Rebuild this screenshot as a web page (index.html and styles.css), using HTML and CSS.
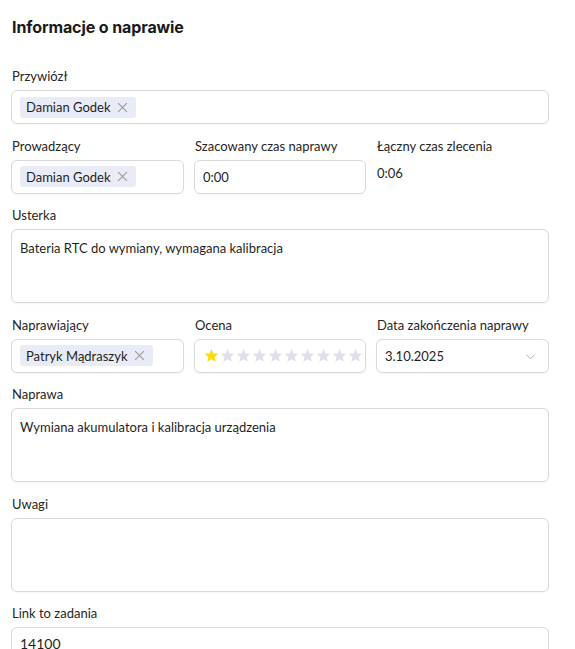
FILE: index.html
```html
<!DOCTYPE html>
<html lang="pl">
<head>
<meta charset="utf-8">
<link rel="stylesheet" href="styles.css">
</head>
<body>
<div class="page">
  <h2 class="title">Informacje o naprawie</h2>

  <div class="field">
    <div class="label">Przywiózł</div>
    <div class="box select">
      <span class="tag">Damian Godek <svg class="x" viewBox="0 0 10 10"><path d="M1 1L9 9M9 1L1 9"/></svg></span>
    </div>
  </div>

  <div class="row">
    <div class="field">
      <div class="label">Prowadzący</div>
      <div class="box select">
        <span class="tag">Damian Godek <svg class="x" viewBox="0 0 10 10"><path d="M1 1L9 9M9 1L1 9"/></svg></span>
      </div>
    </div>
    <div class="field">
      <div class="label">Szacowany czas naprawy</div>
      <div class="box input">0:00</div>
    </div>
    <div class="field">
      <div class="label">Łączny czas zlecenia</div>
      <div class="value">0:06</div>
    </div>
  </div>

  <div class="field">
    <div class="label">Usterka</div>
    <div class="box area">Bateria RTC do wymiany, wymagana kalibracja</div>
  </div>

  <div class="row">
    <div class="field">
      <div class="label">Naprawiający</div>
      <div class="box select">
        <span class="tag">Patryk Mądraszyk <svg class="x" viewBox="0 0 10 10"><path d="M1 1L9 9M9 1L1 9"/></svg></span>
      </div>
    </div>
    <div class="field">
      <div class="label">Ocena</div>
      <div class="box rate">
        <svg class="star on" viewBox="0 0 24 24"><path d="M12 1.5l3.1 7.1 7.7.7-5.8 5.1 1.7 7.6L12 18l-6.7 4 1.7-7.6L1.2 9.3l7.7-.7z"/></svg>
        <svg class="star" viewBox="0 0 24 24"><path d="M12 1.5l3.1 7.1 7.7.7-5.8 5.1 1.7 7.6L12 18l-6.7 4 1.7-7.6L1.2 9.3l7.7-.7z"/></svg>
        <svg class="star" viewBox="0 0 24 24"><path d="M12 1.5l3.1 7.1 7.7.7-5.8 5.1 1.7 7.6L12 18l-6.7 4 1.7-7.6L1.2 9.3l7.7-.7z"/></svg>
        <svg class="star" viewBox="0 0 24 24"><path d="M12 1.5l3.1 7.1 7.7.7-5.8 5.1 1.7 7.6L12 18l-6.7 4 1.7-7.6L1.2 9.3l7.7-.7z"/></svg>
        <svg class="star" viewBox="0 0 24 24"><path d="M12 1.5l3.1 7.1 7.7.7-5.8 5.1 1.7 7.6L12 18l-6.7 4 1.7-7.6L1.2 9.3l7.7-.7z"/></svg>
        <svg class="star" viewBox="0 0 24 24"><path d="M12 1.5l3.1 7.1 7.7.7-5.8 5.1 1.7 7.6L12 18l-6.7 4 1.7-7.6L1.2 9.3l7.7-.7z"/></svg>
        <svg class="star" viewBox="0 0 24 24"><path d="M12 1.5l3.1 7.1 7.7.7-5.8 5.1 1.7 7.6L12 18l-6.7 4 1.7-7.6L1.2 9.3l7.7-.7z"/></svg>
        <svg class="star" viewBox="0 0 24 24"><path d="M12 1.5l3.1 7.1 7.7.7-5.8 5.1 1.7 7.6L12 18l-6.7 4 1.7-7.6L1.2 9.3l7.7-.7z"/></svg>
        <svg class="star" viewBox="0 0 24 24"><path d="M12 1.5l3.1 7.1 7.7.7-5.8 5.1 1.7 7.6L12 18l-6.7 4 1.7-7.6L1.2 9.3l7.7-.7z"/></svg>
        <svg class="star" viewBox="0 0 24 24"><path d="M12 1.5l3.1 7.1 7.7.7-5.8 5.1 1.7 7.6L12 18l-6.7 4 1.7-7.6L1.2 9.3l7.7-.7z"/></svg>
      </div>
    </div>
    <div class="field">
      <div class="label">Data zakończenia naprawy</div>
      <div class="box input date">
        <span>3.10.2025</span>
        <svg class="chev" viewBox="0 0 12 12"><path d="M1.5 4L6 8.5L10.5 4"/></svg>
      </div>
    </div>
  </div>

  <div class="field">
    <div class="label">Naprawa</div>
    <div class="box area">Wymiana akumulatora i kalibracja urządzenia</div>
  </div>

  <div class="field">
    <div class="label">Uwagi</div>
    <div class="box area"></div>
  </div>

  <div class="field">
    <div class="label">Link to zadania</div>
    <div class="box input link">14100</div>
  </div>
</div>
</body>
</html>
```
FILE: styles.css
```css
html, body {
  margin: 0;
  padding: 0;
  background: #ffffff;
}
body {
  font-family: Lato, "Noto Sans", sans-serif;
  font-size: 13px;
  color: #1f1f1f;
  overflow: hidden;
}
.page {
  width: 538px;
  padding: 16px 0 0 11px;
}
.title {
  margin: 0 0 28px 1px;
  font-family: Inter, "Noto Sans", sans-serif;
  font-size: 16px;
  font-weight: 700;
  line-height: 22px;
  color: #1a1a1a;
  letter-spacing: -0.1px;
}
.field {
  margin-bottom: 11.5px;
}
.row {
  display: grid;
  grid-template-columns: 173px 172px 173px;
  column-gap: 10px;
}
.label {
  line-height: 20px;
  margin: 0 0 4px 1px;
  color: #262626;
}
.box {
  box-sizing: border-box;
  border: 1px solid #d9d9d9;
  border-radius: 6px;
  background: #fff;
  box-shadow: 0 1px 2px rgba(0,0,0,0.04);
}
.select {
  height: 34px;
  display: flex;
  align-items: center;
  padding: 0 8px;
}
.tag {
  display: inline-flex;
  align-items: center;
  height: 21px;
  padding: 0 8px 0 6px;
  background: #e9ecf6;
  border-radius: 3px;
  color: #1f1f1f;
  white-space: nowrap;
}
.x {
  width: 11px;
  height: 11px;
  margin-left: 6px;
  stroke: #9a9a9a;
  stroke-width: 1;
  fill: none;
}
.input {
  height: 34px;
  display: flex;
  align-items: center;
  padding: 1px 8px 0;
}
.value {
  line-height: 34px;
  margin-left: 1px;
  margin-top: -4px;
}
.area {
  height: 74px;
  padding: 8px 8px;
  line-height: 20px;
}
.rate {
  height: 34px;
  display: flex;
  align-items: center;
  padding: 0 0 0 9px;
  overflow: hidden;
}
.star {
  width: 15px;
  height: 15px;
  flex: 0 0 15px;
  margin-right: 1px;
  fill: #dde0e6;
}
.star.on {
  fill: #fadb14;
}
.date {
  justify-content: space-between;
}
.chev {
  width: 11px;
  height: 11px;
  margin-right: 4px;
  stroke: #a8a8a8;
  stroke-width: 1;
  fill: none;
}
.link {
  height: 40px;
  align-items: flex-start;
  padding-top: 7px;
  font-size: 14px;
}
```
